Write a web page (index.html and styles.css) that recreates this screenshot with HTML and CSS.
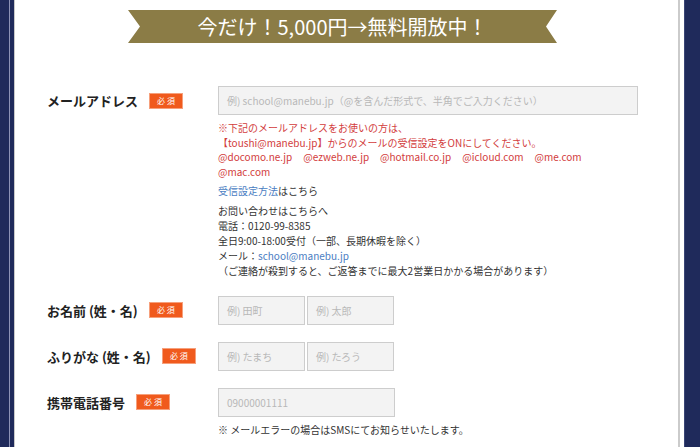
FILE: index.html
```html
<!DOCTYPE html>
<html lang="ja">
<head>
<meta charset="utf-8">
<title>フォーム</title>
<link rel="stylesheet" href="styles.css">
</head>
<body>
<div class="sheet">
  <div class="ribbon">今だけ！5,000円→無料開放中！</div>

  <div class="form">
    <div class="row">
      <div class="label"><span class="label-text">メールアドレス</span><span class="badge">必 須</span></div>
      <div class="field">
        <div class="input wide"><span class="ph">例) school@manebu.jp（@を含んだ形式で、半角でご入力ください）</span></div>
        <div class="warn">
          <p>※下記のメールアドレスをお使いの方は、</p>
          <p>【toushi@manebu.jp】からのメールの受信設定をONにしてください。</p>
          <p><span class="dom">@docomo.ne.jp</span><span class="dom">@ezweb.ne.jp</span><span class="dom">@hotmail.co.jp</span><span class="dom">@icloud.com</span><span class="dom">@me.com</span><br><span class="dom">@mac.com</span></p>
        </div>
        <p class="info"><a class="link">受信設定方法</a>はこちら</p>
        <div class="info contact">
          <p>お問い合わせはこちらへ</p>
          <p>電話：0120-99-8385</p>
          <p>全日9:00-18:00受付（一部、長期休暇を除く）</p>
          <p>メール：<a class="link">school@manebu.jp</a></p>
          <p>（ご連絡が殺到すると、ご返答までに最大2営業日かかる場合があります）</p>
        </div>
      </div>
    </div>

    <div class="row">
      <div class="label"><span class="label-text">お名前 (姓・名)</span><span class="badge">必 須</span></div>
      <div class="field pair">
        <div class="input half"><span class="ph">例) 田町</span></div>
        <div class="input half"><span class="ph">例) 太郎</span></div>
      </div>
    </div>

    <div class="row">
      <div class="label"><span class="label-text">ふりがな (姓・名)</span><span class="badge">必 須</span></div>
      <div class="field pair">
        <div class="input half"><span class="ph">例) たまち</span></div>
        <div class="input half"><span class="ph">例) たろう</span></div>
      </div>
    </div>

    <div class="row">
      <div class="label"><span class="label-text">携帯電話番号</span><span class="badge">必 須</span></div>
      <div class="field">
        <div class="input tel"><span class="ph">09000001111</span></div>
        <p class="info note">※ メールエラーの場合はSMSにてお知らせいたします。</p>
      </div>
    </div>
  </div>
</div>
</body>
</html>
```
FILE: styles.css
```css
html, body {
  margin: 0;
  padding: 0;
}
body {
  height: 447px;
  overflow: hidden;
  font-family: "Noto Sans CJK JP", "Noto Sans", sans-serif;
  color: #333;
  background: linear-gradient(to right,
    #1f2a5b 0 9px,
    #8d93b6 9px 10px,
    #1f2a5b 10px 14px,
    #c9c9c9 14px 15px,
    #ffffff 15px 678px,
    #cbcbcb 678px 680px,
    #ffffff 680px 684px,
    #3a4576 684px 685px,
    #1f2a5b 685px);
}
p { margin: 0; }

.sheet {
  margin-left: 15px;
  width: 663px;
  padding-top: 10px;
}

.ribbon {
  margin-left: 113px;
  width: 429px;
  height: 33px;
  background: #8b7c46;
  color: #fff;
  font-size: 20px;
  line-height: 33px;
  text-align: center;
  clip-path: polygon(0 0, 100% 0, calc(100% - 11px) 50%, 100% 100%, 0 100%, 12px 50%);
}

.form {
  margin-top: 43px;
  padding-left: 32px;
  display: flex;
  flex-direction: column;
  gap: 17px;
}

.row {
  display: grid;
  grid-template-columns: 171px 420px;
  align-items: start;
}

.label {
  height: 29px;
  display: flex;
  align-items: center;
}
.label-text {
  font-size: 13px;
  font-weight: 700;
  color: #222;
}
.badge {
  margin-left: 12px;
  width: 32px;
  height: 14px;
  background: #f05a1d;
  color: #fff;
  font-size: 8px;
  line-height: 14px;
  text-align: center;
  box-shadow: 0 0 0 1px #f6a07c;
}

.field.pair {
  display: flex;
  gap: 2px;
}

.input {
  box-sizing: border-box;
  height: 29px;
  background: #f3f3f3;
  border: 1px solid #cdcdcd;
  padding-left: 8px;
  display: flex;
  align-items: center;
}
.input.wide { width: 420px; }
.input.half { width: 87px; }
.input.tel { width: 177px; }
.ph {
  font-size: 10px;
  color: #b8b8b8;
  white-space: nowrap;
}

.warn {
  margin-top: 6px;
  font-size: 10px;
  line-height: 14.6px;
  color: #d23c3c;
}
.dom {
  white-space: nowrap;
  margin-right: 11px;
}

.info {
  margin-top: 4px;
  font-size: 10px;
  line-height: 15.2px;
  color: #333;
}
.link {
  color: #4a7dc2;
}
.note {
  margin-top: 5px;
}
```
